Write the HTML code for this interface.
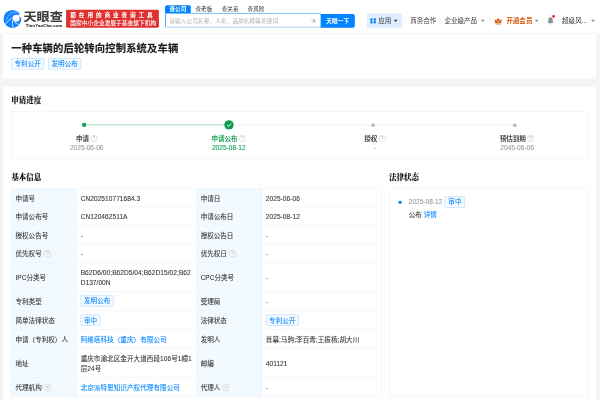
<!DOCTYPE html>
<html lang="zh-CN">
<head>
<meta charset="utf-8">
<title>一种车辆的后轮转向控制系统及车辆 - 天眼查</title>
<style>
*{box-sizing:border-box;margin:0;padding:0}
html,body{width:600px;height:400px;overflow:hidden;background:#f4f4f4}
body{font-family:"Liberation Sans","Noto Sans CJK SC",sans-serif;color:#333;font-size:14px;-webkit-text-stroke:.15px}
#wrap{position:absolute;left:0;top:0;width:1280px;height:854px;transform:scale(.46875);transform-origin:0 0;background:#f4f4f4;overflow:hidden;filter:opacity(1)}
.abs{position:absolute;white-space:nowrap}
/* header */
#hd{position:absolute;left:0;top:0;width:1280px;height:72px;background:#fff;border-bottom:1px solid #ececec}
#hd .t{position:absolute;white-space:nowrap;font-size:14px;line-height:20px;top:35px;color:#3a3a3a;-webkit-text-stroke:0}
#hd .dv{position:absolute;top:38px;width:1px;height:14px;background:#e8e8e8}
.caret{position:absolute;width:0;height:0;border-left:4px solid transparent;border-right:4px solid transparent;border-top:5px solid #888;top:42px}
.logo-t{position:absolute;left:50px;top:20px;font-size:23.5px;line-height:34px;font-weight:700;color:#3a3a3a;letter-spacing:0px;transform:scaleX(1.19);transform-origin:0 0}
.logo-s{position:absolute;left:55px;top:48px;font-size:8.8px;line-height:12px;font-weight:700;color:#222;letter-spacing:.52px;font-family:"Liberation Sans",sans-serif}
.banner{position:absolute;left:141px;top:21px;width:198px;height:38px;background:#e1312f;border-radius:3px;color:#fff;font-size:12px;padding-left:9px}
.banner .l1{position:absolute;left:9px;top:6px;line-height:13px;font-size:12px;font-weight:700;letter-spacing:6.2px;white-space:nowrap}
  .banner .l2{position:absolute;left:9px;top:22.5px;line-height:13px;font-size:12px;letter-spacing:.2px;white-space:nowrap}
.tabs{position:absolute;left:352px;top:11px;height:17px;font-size:12px;line-height:19px;white-space:nowrap}
.tabs span{position:absolute;top:0;height:17px;color:#333;-webkit-text-stroke:0}
.tabs .on{left:0;width:55px;background:#0084ff;color:#fff;font-weight:700;text-align:center;border-radius:4px 4px 0 0}
.sinput{position:absolute;left:352px;top:28px;width:333px;height:31px;border:2px solid #4da6ff;border-right:none;border-radius:0 0 0 3px;background:#fff;font-size:12px;line-height:29px;color:#b0b0b0;-webkit-text-stroke:0;letter-spacing:.25px;padding-left:7px;white-space:nowrap}
.sbtn{position:absolute;left:684px;top:29.5px;width:73px;height:29.5px;background:#0084ff;border-radius:0 4px 4px 0;color:#fff;font-size:12px;font-weight:700;line-height:30px;text-align:center;letter-spacing:.2px;-webkit-text-stroke:0}
.clr{position:absolute;left:663px;top:38px;width:12px;height:12px;border:1px solid #d5d5d5;border-radius:50%}
.clr:before,.clr:after{content:"";position:absolute;left:4.5px;top:1.5px;width:1px;height:7px;background:#777;transform:rotate(45deg)}
.clr:after{transform:rotate(-45deg)}
.app{position:absolute;left:783px;top:28px;width:75px;height:32px;background:#e0eeff;border-radius:2px}
.app i{position:absolute;width:5px;height:5px;background:#0084ff;border-radius:2px}
/* cards */
.card{position:absolute;left:6.5px;width:1265px;background:#fff}
h1{position:absolute;left:24px;top:89px;font-size:22px;line-height:30px;font-weight:700;color:#1d1d1d;white-space:nowrap;letter-spacing:.28px;-webkit-text-stroke:.3px #1d1d1d}
.tag{position:absolute;height:24px;line-height:22px;font-size:14px;color:#0084ff;background:#f6fbff;border:1px solid #9ccfff;border-radius:2px;padding:0 6px;white-space:nowrap}
.h2{position:absolute;font-size:16px;line-height:22px;font-weight:900;color:#111;white-space:nowrap;font-family:"Liberation Serif","Noto Serif CJK SC",serif;letter-spacing:0}
.pbox{position:absolute;left:24px;top:237.5px;width:1232px;height:102px;border:1px solid #e9eff6;background:#fff}
.step{position:absolute;top:0;width:200px;text-align:center;white-space:nowrap}
.step .lb{position:absolute;left:0;width:200px;top:47px;font-size:14px;line-height:20px;color:#333;font-weight:500}
.step .dt{position:absolute;left:0;width:200px;top:66px;font-size:14px;line-height:20px;color:#999}
.q{display:inline-block;width:16px;height:16px;border:1px solid #c2c2c2;border-radius:50%;font-size:11px;line-height:14px;text-align:center;color:#c2c2c2;vertical-align:-1.5px;position:relative;top:-3px;margin-left:4px;font-weight:400;font-family:"Liberation Sans",sans-serif}
.q.q2{width:15px;height:15px;line-height:13px;font-size:10px;margin-left:3px}
/* table */
table{position:absolute;left:23px;top:401.5px;width:790px;border-collapse:collapse;table-layout:fixed;font-size:14px}
td{border:1px solid #e3f0fc;height:39.33px;padding:3px 8px 0;line-height:22px;color:#333;vertical-align:middle;word-break:break-all}
td.k{background:#f2f9ff;width:140px;padding-left:9px}
td.v{width:255px;letter-spacing:.12px}
.tg{display:inline-block;height:24px;line-height:22px;font-size:14px;color:#0084ff;background:#f6fbff;border:1px solid #9ccfff;border-radius:2px;padding:0 6px;vertical-align:middle;position:relative;top:-1.5px}
a{color:#0084ff;text-decoration:none}
.law{position:absolute;left:830px;top:402px;width:426px;height:445px;border:1px solid #e8eef6;background:#fff}
</style>
</head>
<body>
<div id="wrap">

<div id="hd">
  <svg class="abs" style="left:7px;top:20.5px" width="39" height="39" viewBox="0 0 39 39">
    <circle cx="19.5" cy="19.5" r="19.2" fill="#1283ff"/>
    <circle cx="27.6" cy="17.8" r="7.4" fill="#fff"/>
    <path d="M32 10.5 L39 7 L39 15.5 L35 16.5Z" fill="#fff"/>
    <path d="M21 15.5 Q10 22 3.8 31.8" stroke="#fff" stroke-width="1.6" fill="none"/>
    <path d="M20 21 Q18.5 30 21.2 38" stroke="#fff" stroke-width="1.5" fill="none"/>
    <path d="M23.5 26 Q29.5 31.5 36.5 31.5" stroke="#fff" stroke-width="1.4" fill="none"/>
    <path d="M7 22 Q9.5 8.5 23 4.8 Q29 3.8 33 6.5" stroke="#9fceff" stroke-width="1.3" fill="none"/>
  </svg>
  <div class="logo-t">天眼查</div>
  <div class="logo-s">TianYanCha.com</div>

  <div class="banner"><div class="l1">都在用的商业查询工具</div><div class="l2">国家中小企业发展子基金旗下机构</div></div>

  <div class="tabs"><span class="on">查公司</span><span style="left:65px">查老板</span><span style="left:121px">查关系</span><span style="left:176px">查风险</span></div>
  <div class="sinput">请输入公司名称、人名、品牌名称等关键词</div>
  <div class="clr"></div>
  <div class="sbtn">天眼一下</div>

  <div class="app"><i style="left:7.3px;top:10.5px"></i><i style="left:14.3px;top:10.5px"></i><i style="left:7.3px;top:17.2px"></i><i style="left:14.3px;top:17.2px"></i></div>
  <div class="t" style="left:807px">应用</div>
  <div class="caret" style="left:840px;border-top-color:#333"></div>
  <div class="dv" style="left:865px"></div>
  <div class="t" style="left:875px">商务合作</div>
  <div class="dv" style="left:939px"></div>
  <div class="t" style="left:948px">企业级产品</div>
  <div class="caret" style="left:1026px"></div>
  <div class="dv" style="left:1045px"></div>
  <svg class="abs" style="left:1054px;top:36.5px" width="17.5" height="16" viewBox="0 0 17 15">
    <path d="M1 3.5 L4.8 6.5 L8.5 0.8 L12.2 6.5 L16 3.5 L14.4 12 H2.6Z" fill="#d8590c"/>
    <path d="M6 7.6 L8.5 10 L11 7.6" fill="none" stroke="#fff" stroke-width="1.5"/>
    <rect x="2.6" y="13" width="11.8" height="1.6" fill="#d8590c"/>
  </svg>
  <div class="t" style="left:1080px;color:#d8590c;font-weight:700">开通会员</div>
  <div class="caret" style="left:1141px"></div>
  <div class="dv" style="left:1159px"></div>
  <svg class="abs" style="left:1167px;top:36px" width="15" height="17" viewBox="0 0 15 17">
    <path d="M7.5 1 C4.3 1 2.8 3.6 2.8 6.5 V10.5 L1 13 H14 L12.2 10.5 V6.5 C12.2 3.6 10.7 1 7.5 1Z" fill="#8a8f99"/>
    <path d="M5.5 14.2 H9.5 C9.5 15.5 8.6 16.2 7.5 16.2 C6.4 16.2 5.5 15.5 5.5 14.2Z" fill="#8a8f99"/>
  </svg>
  <div class="abs" style="left:1178px;top:32px;width:6px;height:6px;border-radius:50%;background:#f5222d"></div>
  <div class="dv" style="left:1190px"></div>
  <div class="t" style="left:1199px">超级风...</div>
  <div class="caret" style="left:1261px"></div>
</div>

<div class="card" style="top:73px;height:95px"></div>
<h1>一种车辆的后轮转向控制系统及车辆</h1>
<div class="tag" style="left:24px;top:124px">专利公开</div>
<div class="tag" style="left:103px;top:124px">发明公布</div>

<div class="card" style="top:184.5px;height:700px"></div>
<div class="h2" style="left:24px;top:203.5px">申请进度</div>
<div class="pbox">
  <div class="abs" style="left:155px;top:27.5px;width:308px;height:1.3px;background:#3dba7b"></div>
  <div class="abs" style="left:463px;top:27.7px;width:616px;height:1.2px;background:#d9dde6"></div>
  <div class="abs" style="left:150px;top:23.7px;width:9px;height:9px;border-radius:50%;background:#0a9d4d"></div>
  <svg class="abs" style="left:452.5px;top:17.7px" width="21" height="21" viewBox="0 0 20 20"><circle cx="10" cy="10" r="9.5" fill="#0a9d4d"/><path d="M5.8 10.2 L8.8 13 L14.3 7.3" fill="none" stroke="#fff" stroke-width="2"/></svg>
  <div class="abs" style="left:767px;top:24.2px;width:8px;height:8px;border-radius:50%;background:#b9bcc9"></div>
  <div class="abs" style="left:1069px;top:24.2px;width:8px;height:8px;border-radius:50%;background:#b9bcc9"></div>

  <div class="step" style="left:60px"><div class="lb">申请<span class="q q2">?</span></div><div class="dt">2025-06-06</div></div>
  <div class="step" style="left:363px"><div class="lb" style="color:#0a9d4d">申请公布<span class="q q2">?</span></div><div class="dt" style="color:#0a9d4d">2025-08-12</div></div>
  <div class="step" style="left:675px"><div class="lb">授权<span class="q q2">?</span></div><div class="dt">-</div></div>
  <div class="step" style="left:978px"><div class="lb">预估到期<span class="q q2">?</span></div><div class="dt">2045-06-06</div></div>
</div>

<div class="h2" style="left:24px;top:367px">基本信息</div>
<div class="h2" style="left:830px;top:367px">法律状态</div>

<table>
<tr><td class="k">申请号</td><td class="v">CN202510771684.3</td><td class="k">申请日</td><td class="v">2025-06-06</td></tr>
<tr><td class="k">申请公布号</td><td class="v">CN120462511A</td><td class="k">申请公布日</td><td class="v">2025-08-12</td></tr>
<tr><td class="k">授权公告号</td><td class="v">-</td><td class="k">授权公告日</td><td class="v">-</td></tr>
<tr><td class="k">优先权号<span class="q">?</span></td><td class="v">-</td><td class="k">优先权日<span class="q">?</span></td><td class="v">-</td></tr>
<tr><td class="k" style="height:62px">IPC分类号</td><td class="v">B62D6/00;B62D5/04;B62D15/02;B62<br>D137/00N</td><td class="k">CPC分类号</td><td class="v">-</td></tr>
<tr><td class="k" style="height:41px">专利类型</td><td class="v"><span class="tg">发明公布</span></td><td class="k">受理局</td><td class="v">-</td></tr>
<tr><td class="k" style="height:41px">简单法律状态</td><td class="v"><span class="tg">审中</span></td><td class="k">法律状态</td><td class="v"><span class="tg">专利公开</span></td></tr>
<tr><td class="k" style="height:40.3px">申请（专利权）人</td><td class="v"><a>阿维塔科技（重庆）有限公司</a></td><td class="k">发明人</td><td class="v">肖幕;马驹;李百青;王振杨;胡大川</td></tr>
<tr><td class="k" style="height:62px">地址</td><td class="v">重庆市渝北区金开大道西段106号1幢1层24号</td><td class="k">邮编</td><td class="v">401121</td></tr>
<tr><td class="k" style="height:40.3px">代理机构<span class="q">?</span></td><td class="v"><a>北京派特恩知识产权代理有限公司</a></td><td class="k">代理人<span class="q">?</span></td><td class="v">-</td></tr>
</table>

<div class="law">
  <div class="abs" style="left:18.5px;top:24.5px;width:7px;height:7px;border-radius:50%;background:#0084ff"></div>
  <div class="abs" style="left:41px;top:17px;font-size:14px;line-height:22px;color:#999">2025-08-12</div>
  <div class="tag" style="left:118px;top:16px;padding:0 6.5px">审中</div>
  <div class="abs" style="left:41px;top:44px;font-size:14px;line-height:22px;color:#333">公布 <a>详情</a></div>
</div>

</div>
</body>
</html>
